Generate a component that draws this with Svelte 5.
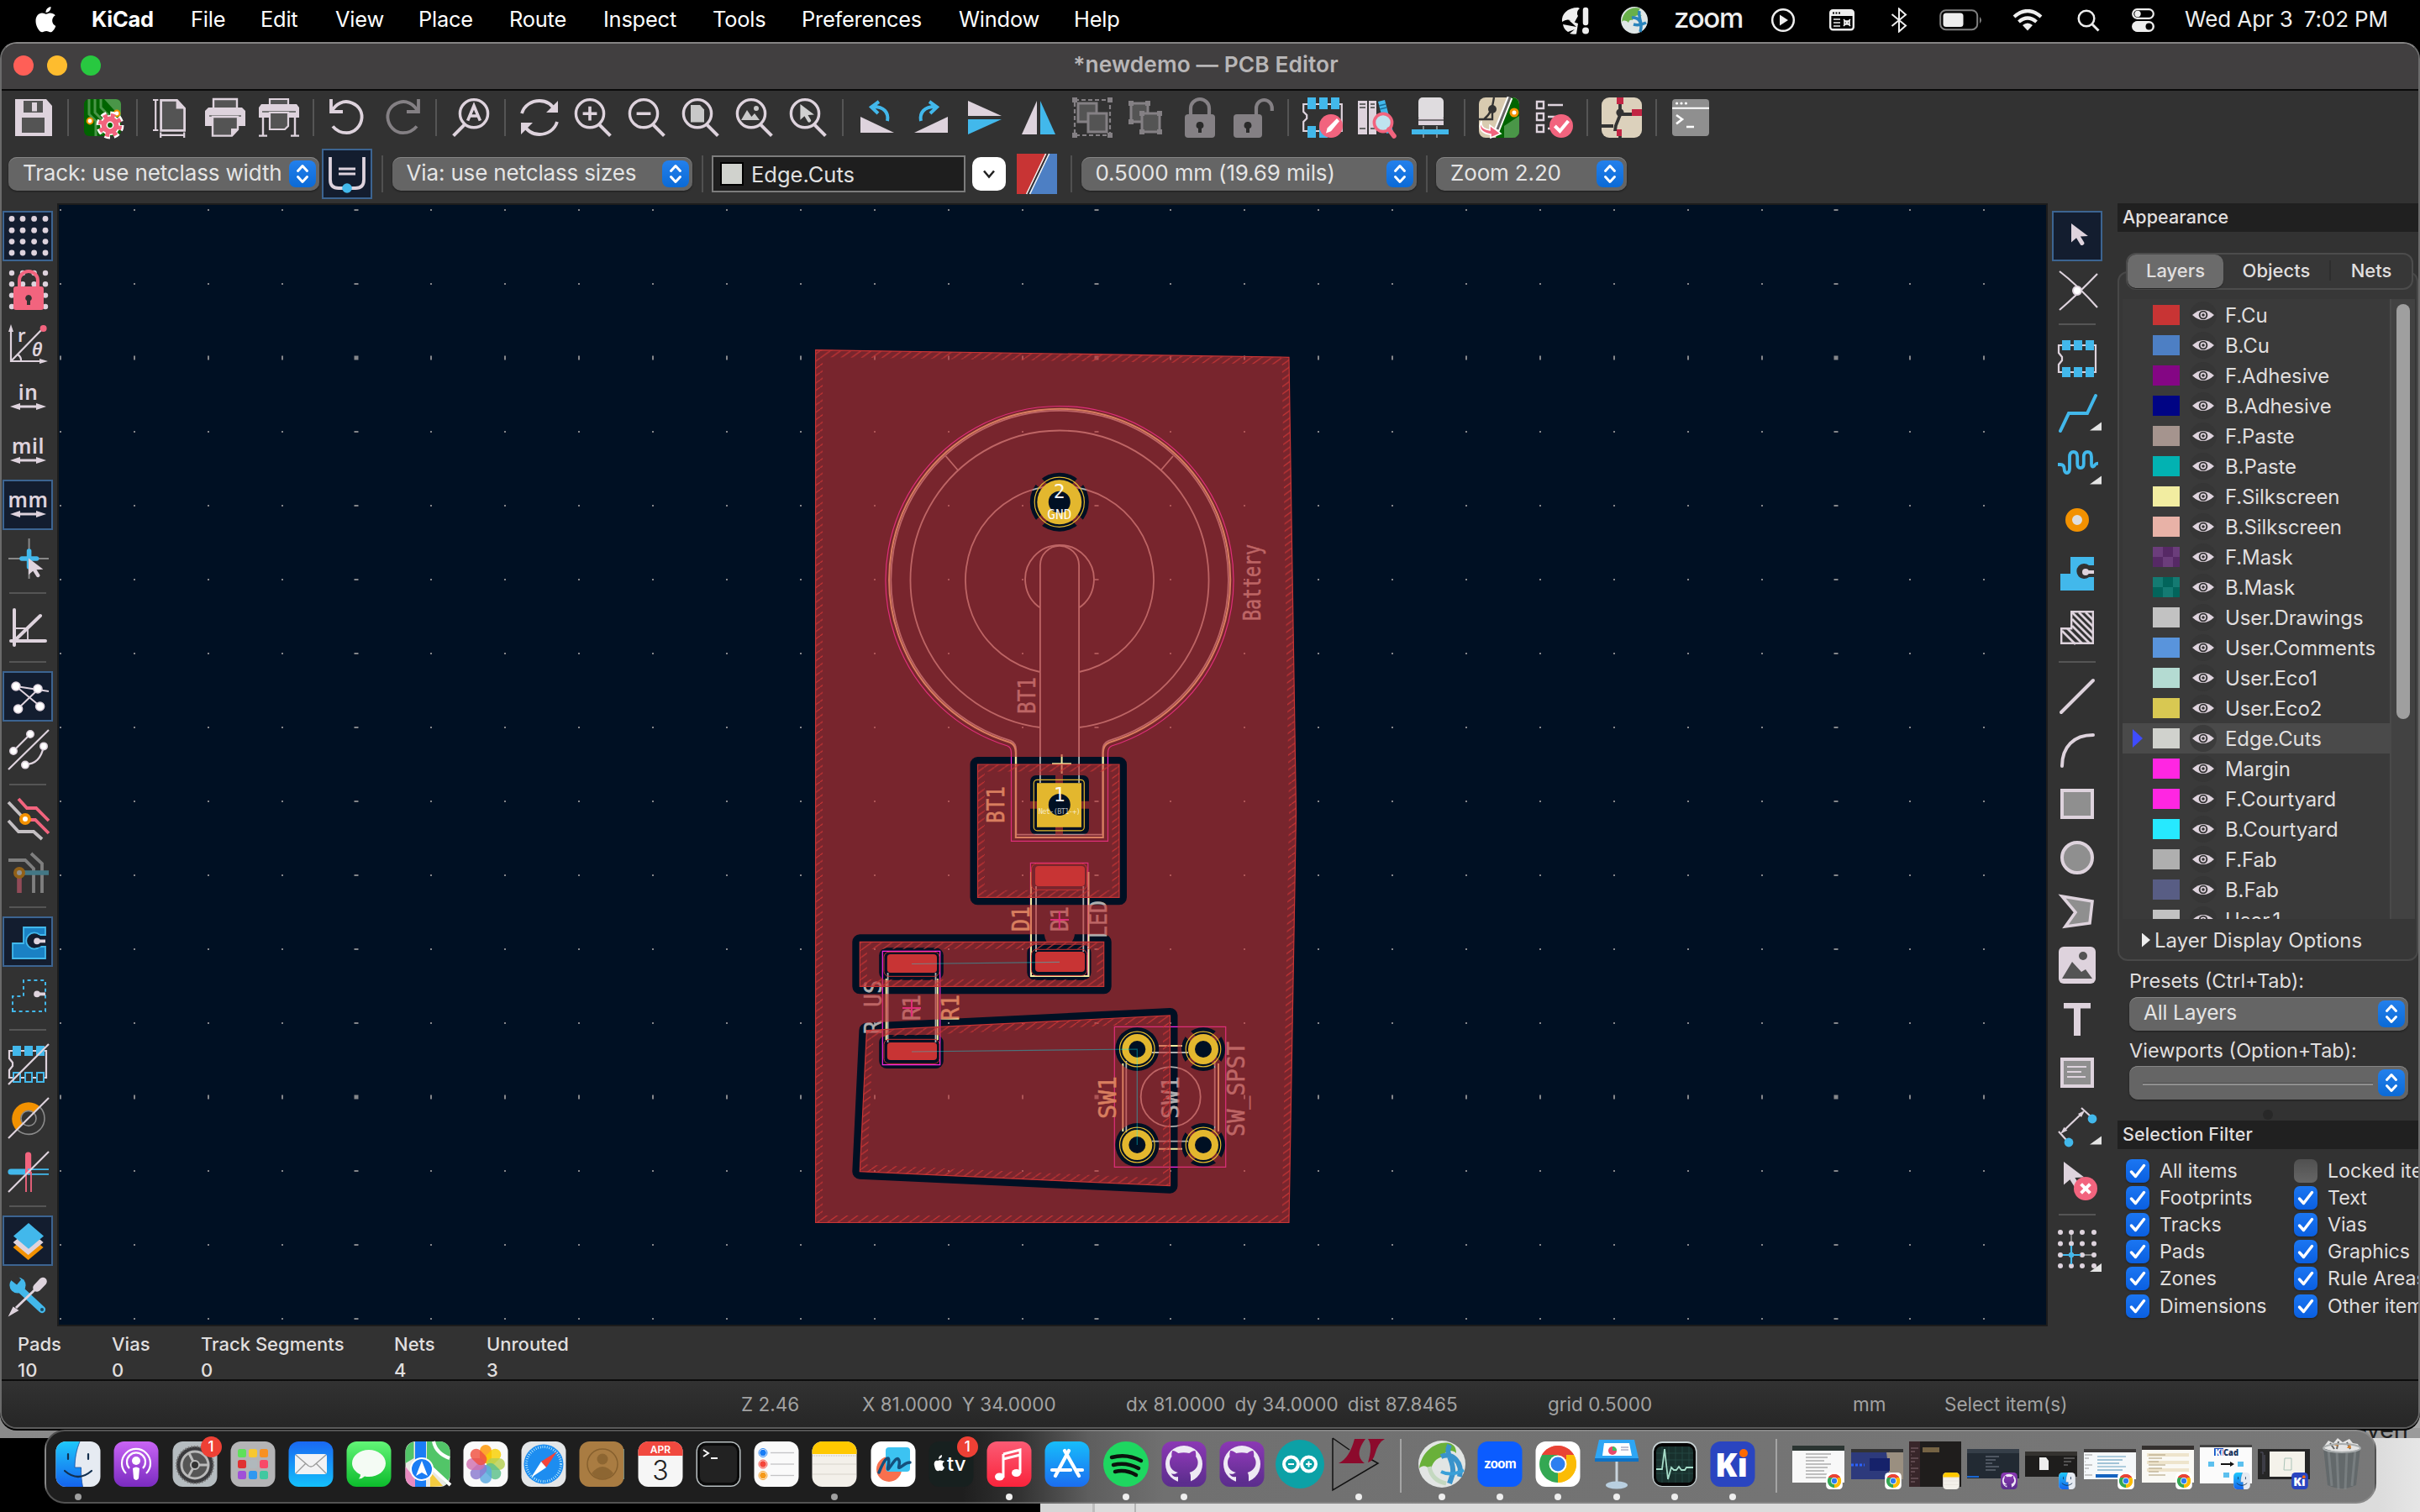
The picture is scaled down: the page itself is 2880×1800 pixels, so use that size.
<script>
  const L = '#ded3dd', B = '#42b8eb', P = '#f2647e', O = '#f29100', D = '#848084', G = '#545454';

  const mag = (inner) => `<circle cx="10" cy="9.6" r="8.3" fill="none" stroke="${L}" stroke-width="1.7"/><path d="M15.6 16.2l6.6 6.6" stroke="${L}" stroke-width="2"/>${inner}`;
  const arrowCursor = (x, y, s, c = L) => `<path transform="translate(${x} ${y}) scale(${s})" d="M0 0v12l3.2-2.8 2.6 4.2c.8 1.2 3-.1 2.3-1.4L5.8 8.3 10.6 8z" fill="${c}"/>`;
  const chip = (fillBottom = true) => `<path d="M1 4h22v16H1v-4.5l2-2.5v-2L1 8.500z" fill="none" stroke="${L}" stroke-width="1.1"/>` +
    [3, 10, 17].map((x) => `<rect x="${x}" y="1" width="5" height="6" fill="${B}"/>` + (fillBottom ? `<rect x="${x}" y="17" width="5" height="6" fill="${B}"/>` : `<rect x="${x + 0.5}" y="17" width="4" height="5.500" fill="#323232" stroke="${B}"/>`)).join('');
  const dots = (xs, ys, r = 1.25) => ys.map((y) => xs.map((x) => `<circle cx="${x}" cy="${y}" r="${r}" fill="${L}"/>`).join('')).join('');
  const units = (t) => `<text x="12.300" y="13.500" font-family="Noto Sans" font-weight="600" font-size="12.200" letter-spacing=".3" text-anchor="middle" fill="${L}">${t}</text><path d="M1.500 17.500l6-2v1.300h9.500v-1.300l6 2-6 2v-1.300H7.500v1.300z" fill="${L}"/>`;
  const box = (x, y, w, h, c) => `<rect x="${x}" y="${y}" width="${w}" height="${h}" fill="${G}" stroke="${c}" stroke-width="1.500"/>`;
  const sq = (x, y, c) => `<rect x="${x}" y="${y}" width="3" height="3" fill="${c}"/>`;
  const flyout = `<path d="M26.500 17.800v5h-7z" fill="#e4e4e4"/>`;

  const icons = {
    save: `<path d="M1 1h18.500L23 5v18H1z" fill="${L}"/><path d="M6 2h11.500v7H6zM5 12h13.500v9H5z" fill="${G}"/><path d="M11 3h3v5.300h-3z" fill="${L}"/>`,
    setup: `<rect x="1" y="1" width="22" height="22" rx="3" fill="#006400"/><path d="M4 1v9l4 4v9M7.500 1v8l4 4v9M11 1v5l5 5" stroke="#4a9648" stroke-width="1.500" fill="none"/><path d="M13 1h7a3 3 0 0 1 3 3v8z" fill="#4a9648"/><circle cx="4.500" cy="14" r="1.700" fill="#fff" stroke="${O}"/><circle cx="20.500" cy="9.500" r="1.700" fill="#fff" stroke="${O}"/><circle cx="16.500" cy="16.500" r="6" fill="none" stroke="#fff" stroke-width="4.500" stroke-dasharray="2.700 2"/><circle cx="16.500" cy="16.500" r="3.700" fill="none" stroke="#fff" stroke-width="4.500"/><circle cx="16.500" cy="16.500" r="5.800" fill="none" stroke="${P}" stroke-width="2.500" stroke-dasharray="2.500 2.050" stroke-dashoffset="-.3"/><circle cx="16.500" cy="16.500" r="3.700" fill="none" stroke="${P}" stroke-width="3"/>`,
    page: `<path d="M5.800 1.700h9.500l4.500 4.800v13.200h-14z" fill="${G}" stroke="${L}" stroke-width="1.400"/><path d="M14.800 1.500v5.300h5z" fill="${L}"/><path d="M1 1.500h3.200M1 19.500h3.200M2.600 1.500v18M5.600 22.400h14M5.600 20.800V24M19.600 20.800V24" stroke="${L}" stroke-width="1.100"/>`,
    print: `<path d="M5 1h14v6H5z" fill="${G}" stroke="${L}" stroke-width="1.200"/><path d="M2 6h20l2 2v9h-4v-6H4v6H0V8z" fill="${L}"/><path d="M2.500 11h19" stroke="#777" stroke-width="1"/><path d="M4.500 11.500h15V19l-3.500 3.800H4.500z" fill="${G}" stroke="${L}" stroke-width="1.200"/><path d="M15.500 23v-4.500h4z" fill="${L}"/>`,
    plot: `<path d="M6.500 1h11v4h-11z" fill="${G}" stroke="${L}" stroke-width="1.100"/><path d="M1.500 4h21L24 6v6H0V6z" fill="${L}"/><path d="M2 8.500h20" stroke="#777"/><path d="M6.500 9h11v8l-2 2h-9z" fill="${G}" stroke="${L}" stroke-width="1.100"/><path d="M2.500 12v10.500M21.500 12v10.500M0 22.800h5M19 22.800h5" stroke="${L}" stroke-width="1.200"/>`,
    undo: `<path d="M2 1v7.500h7" fill="none" stroke="${L}" stroke-width="1.900"/><path d="M2.500 8C5 3.500 9.500 1.800 13 2.800c4.500 1.200 7.600 4.700 7.300 9.300-.4 5-4.300 9-9 9-3.300 0-6-1.100-8.300-3.900" fill="none" stroke="${L}" stroke-width="1.900"/>`,
    redo: `<path d="M22 1v7.500h-7" fill="none" stroke="${D}" stroke-width="1.900"/><path d="M21.500 8C19 3.500 14.500 1.800 11 2.800 6.500 4 3.400 7.500 3.700 12.100c.4 5 4.300 9 9 9 3.300 0 6-1.100 8.300-3.900" fill="none" stroke="${D}" stroke-width="1.900"/>`,
    find: `<circle cx="14" cy="9.600" r="8.300" fill="none" stroke="${L}" stroke-width="1.700"/><path d="M8.400 16.200l-6.600 6.600" stroke="${L}" stroke-width="2"/><path d="M10.300 13.800L14 5l3.700 8.800M11.700 11h4.600" fill="none" stroke="${L}" stroke-width="1.800"/>`,
    refresh: `<path d="M1.500 9.500C3 4.500 7.500 2 12 2c4 0 7.500 2.300 9.500 6M22.500 14.500C21 19.500 16.500 22 12 22c-4 0-7.500-2.300-9.500-6" fill="none" stroke="${L}" stroke-width="1.900"/><path d="M23 2v7h-7zM1 22v-7h7z" fill="${L}"/>`,
    zoomin: mag(`<path d="M10 5.400v8.400M5.800 9.600h8.400" stroke="${L}" stroke-width="1.800"/>`),
    zoomout: mag(`<path d="M5.800 9.600h8.400" stroke="${L}" stroke-width="1.800"/>`),
    zoompage: mag(`<path d="M6 4.500h5.500L14 7.300v7.400H6z" fill="#c8c8c8"/>`),
    zoomobj: mag(`<path d="M4 13.500l3.500-6 2.700 4 1.800-2 3 4z" fill="#c8c8c8"/><circle cx="13" cy="6.500" r="1.500" fill="#c8c8c8"/>`),
    zoomsel: mag(arrowCursor(7.2, 4, 0.78, '#d0d0d0')),
    rotl: `<path d="M2 11.500V21h20z" fill="${L}"/><path d="M18 14C19 9 16 5.500 9.500 5.500M13 2.500L8.500 5.700 12.500 9.500" fill="none" stroke="${B}" stroke-width="2"/>`,
    rotr: `<path d="M22 11.500V21H2z" fill="${L}"/><path d="M6 14C5 9 8 5.500 14.500 5.500M11 2.500l4.500 3.200L11.500 9.500" fill="none" stroke="${B}" stroke-width="2"/>`,
    mirv: `<path d="M2 2v9h20z" fill="${L}"/><path d="M2 22v-9h20z" fill="${B}"/>`,
    mirh: `<path d="M2 22h9V2z" fill="${L}"/><path d="M22 22h-9V2z" fill="${B}"/>`,
    group: `<path d="M1.500 1.500h21v21h-21z" fill="none" stroke="${D}" stroke-width="1.100" stroke-dasharray="2.500 1.500"/>${box(3.5, 3.5, 11, 11, D)}${box(9.5, 9.5, 11, 11, D)}${sq(0, 0, D)}${sq(21, 0, D)}${sq(0, 21, D)}${sq(21, 21, D)}`,
    ungroup: `${box(3, 3.5, 10, 11, D)}${box(9.500, 9.5, 10.500, 11, D)}${[[1.5, 2], [11.5, 2], [1.5, 13], [8, 8], [18.500, 8], [8, 19], [18.500, 19]].map(([x, y]) => sq(x, y, D)).join('')}`,
    lock: `<path d="M6.500 11V6.500a5.500 5.500 0 0 1 11 0V11" fill="none" stroke="${D}" stroke-width="2.100"/><rect x="3" y="10" width="18" height="14" rx="2" fill="${D}"/><path d="M12 14.500a2.100 2.100 0 0 1 1 4V21h-2v-2.500a2.100 2.100 0 0 1 1-4z" fill="#2a2a2a"/>`,
    unlock: `<path d="M13.500 11V6.500a4.700 5 0 0 1 9.400 0V8" fill="none" stroke="${D}" stroke-width="2.100"/><rect x="0" y="10" width="17" height="14" rx="2" fill="${D}"/><path d="M8.500 14.500a2.100 2.100 0 0 1 1 4V21h-2v-2.500a2.100 2.100 0 0 1 1-4z" fill="#2a2a2a"/>`,
    fpedit: `<path d="M.6 4h22.800v16H.6v-5.500l2-2v-2l-2-2z" fill="none" stroke="${L}" stroke-width="1.100"/><path d="M3 0h5v7H3zM10 0h5v7h-5zM17 0h5v7h-5zM3 17h5v7H3zM10 17h5v7h-5z" fill="${B}"/><circle cx="17" cy="17" r="7" fill="${P}"/><path d="M20.500 12.500l1.500 1.600-5 6-3 1.200.8-3z" fill="#fff"/>`,
    lib: `<path d="M1 2h5.500v20H1zM7.500 2H12v20H7.500z" fill="${L}"/><path d="M2 4h3.500M2 6h3.500M8.500 4H11M8.500 6H11M2 18.500h3.500M8.500 18.500H11" stroke="#666"/><path d="M13 2.500l4-1 5 19-4 1z" fill="${B}"/><path d="M13.500 5l4-1M14 7l4-1" stroke="#1a6f99" stroke-width=".7"/><circle cx="16" cy="15" r="5.300" fill="#bfe3ef" stroke="${P}" stroke-width="1.800"/><path d="M19.500 19l3 4" stroke="${P}" stroke-width="2.800" stroke-linecap="round"/>`,
    show3d: `<rect x="5" y="0" width="15" height="14" rx="2.500" fill="#dfdcdf"/><path d="M5 12.500h15v4H5z" fill="${L}"/><path d="M5 13.500h15" stroke="#555" stroke-width=".7"/><path d="M8 17v7M16 17v7" stroke="#888"/><rect x="1" y="19" width="22" height="3" fill="${B}"/>`,
    update: `<rect width="24" height="24" rx="4" fill="#d8cbb0"/><path d="M18 0h2a4 4 0 0 1 4 4v16a4 4 0 0 1-4 4H10z" fill="#006400"/><path d="M24 11v9a4 4 0 0 1-4 4h-5v-7z" fill="#4a9648"/><path d="M9 0c-1 5-1 9-6 13M8 7v6H0" stroke="#333" stroke-width="1.200" fill="none"/><circle cx="8" cy="7" r="2.500" fill="#333"/><path d="M18.500 0L10.500 20" stroke="#fff" stroke-width="3.500"/><path d="M18.500 0L11 19" stroke="#666" stroke-width="1.500"/><circle cx="21" cy="9" r="2" fill="#fff" stroke="${O}" stroke-width="1.500"/><path d="M1.500 14c-.5 4 2 5 5 5.500v-3l6.500 5L7 24v-2C2.500 21.500-1 19 1.500 14z" fill="${P}" stroke="#fff" stroke-width=".8"/>`,
    drc: `<path d="M2.500 2.500h4v4h-4zM2.500 9.500h4v4h-4zM2.500 16.500h4v4h-4zM9 4.500h9M9 11.500h6M9 18.500h3" fill="none" stroke="${L}" stroke-width="1.200"/><circle cx="17" cy="17" r="7" fill="${P}"/><path d="M13.200 17l3 3 5-6" fill="none" stroke="#fff" stroke-width="2"/>`,
    route: `<rect width="24" height="24" rx="4.500" fill="#dcd1bc"/><path d="M11 3v6l1 1h7M11 9c0 5-3 5-3 11M0 17h7M11 20v4" fill="none" stroke="#333" stroke-width="1.900"/><circle cx="11" cy="9" r="2.300" fill="#333"/><path d="M9 0h4v4H9zM18 7h6v4h-6zM9 19h3v4H9z" fill="#c22644"/>`,
    term: `<rect x="1" y="1" width="22" height="22" rx="2" fill="#8f8f8f"/><path d="M1 6.400h22" stroke="#fff"/><path d="M3.500 10.500L7 13l-3.500 2.700M9.500 17.500h4.500" fill="none" stroke="#fff" stroke-width="1.300"/><circle cx="3.800" cy="3.500" r=".8" fill="#fff"/><circle cx="6.500" cy="3.500" r=".8" fill="#fff"/><circle cx="9.200" cy="3.500" r=".8" fill="#fff"/>`,
    autotrack: `<path d="M2 2v13.500q0 5 5 5h10q5 0 5-5V2" fill="none" stroke="${L}" stroke-width="1.900"/><path d="M7 9h10M7 12h10" stroke="${L}" stroke-width="1.400"/><circle cx="12" cy="20.500" r="2.900" fill="${B}"/>`,
    pair: `<path d="M0 0h18L6 24H0z" fill="#c83434"/><path d="M19 0h5v24H7z" fill="#4d7fc4"/><path d="M17.300 0L5.800 24M19.300 0L7.800 24" stroke="#eee" stroke-width=".8"/><path d="M18.300 0L6.800 24" stroke="#333" stroke-width=".7"/>`,

    grid: dots([2.500, 9, 15.800, 22.500], [1.700, 8.600, 15.300, 22], 1.700),
    gridlock: dots([2.500, 9, 15.800, 22.500], [2, 8.600, 15.300, 22], 1.600) + `<path d="M7 10V6.500a5.500 5.500 0 0 1 11 0V10" fill="none" stroke="${P}" stroke-width="2"/><rect x="3.500" y="10" width="18" height="14" rx="1.500" fill="${P}"/><path d="M12.500 15a1.900 1.900 0 0 1 1 3.500V21h-2v-2.500a1.900 1.900 0 0 1 1-3.500z" fill="#323232"/>`,
    polar: `<path d="M2 3v19.500h20" fill="none" stroke="${L}" stroke-width="1.100"/><path d="M.5 5L2 .5 3.500 5zM19 21l5 1.500L19 24z" fill="${L}"/><path d="M2 22.500L21 3M6 18.500q2.300 1.500 2 4" fill="none" stroke="${L}" stroke-width="1.100"/><circle cx="21.300" cy="3" r="2" fill="${P}"/><text x="6" y="11" font-family="Noto Sans" font-weight="600" font-size="11" fill="${L}">r</text><text x="14.500" y="19.500" font-family="Noto Sans" font-style="italic" font-weight="600" font-size="11" fill="${L}">θ</text>`,
    inch: units('in'),
    mil: units('mil'),
    mm: units('mm'),
    cross: `<path d="M12.800 0v24M.5 12h24" stroke="#888" stroke-width="1"/><path d="M12.800 7.500v9.500M8.500 12h8.800" stroke="${B}" stroke-width="2.800" stroke-linecap="round"/>${arrowCursor(12.500, 11.800, 0.820)}`,
    angle: `<path d="M4 1.500v21M2 20h20.500M4 20L19.500 5" fill="none" stroke="${L}" stroke-width="2" stroke-linecap="round"/><path d="M4 12.500h8V20" fill="none" stroke="${L}" stroke-width=".9"/>`,
    rats: `<path d="M5 6l19.500 3M5 6l14.500 12M6 19.500L18.500 7.500" stroke="${L}" stroke-width="1"/><g fill="#fff" stroke="${L}" stroke-width=".8"><circle cx="5" cy="6" r="2.500"/><circle cx="18" cy="7.500" r="2.500"/><circle cx="6.300" cy="19.500" r="2.500"/><circle cx="19.300" cy="18" r="2.500"/></g>`,
    curved: `<path d="M.5 23.500L24.500 0M3.500 12.500l10-10M10.500 20.500q9 0 11-11" fill="none" stroke="${L}" stroke-width="1.100"/><g fill="#fff" stroke="${L}" stroke-width=".8"><circle cx="3.500" cy="12.500" r="2.100"/><circle cx="13.500" cy="2.500" r="2.100"/><circle cx="10.500" cy="20.800" r="2.100"/><circle cx="21.500" cy="9.700" r="2.100"/></g>`,
    hilite: `<path d="M.5 2L10 12M.5 13l6 6.500h9l5 4.500" stroke="#c4c0c3" stroke-width="1.900" fill="none"/><path d="M6.500 0l5 5.500h5.500l7.500 7.500M11 12.500h5.500l8 8" stroke="${P}" stroke-width="1.900" fill="none"/><circle cx="10.500" cy="12" r="2.500" fill="#fff" stroke="${O}" stroke-width="2"/>`,
    hilite2: `<g opacity=".5"><path d="M.5 4.500h10l5 5V24M14 .5l6.500 6V24" stroke="#ccc" stroke-width="1.900" fill="none"/><path d="M7 12h17.500" stroke="#55bcd8" stroke-width="2.700"/><path d="M7 13v11" stroke="${P}" stroke-width="2.800"/><circle cx="7" cy="12" r="2.500" fill="#eee" stroke="${O}" stroke-width="2"/></g>`,
    zonefill: `<path d="M3 22V13h6.500V3.500h13V8h-3.300a4.800 4.800 0 1 0 0 7h3.300v7z" fill="#1a81c4" stroke="${B}" stroke-width=".9"/><circle cx="17.500" cy="11.700" r="3.800" fill="#131d2f"/><circle cx="17.500" cy="11.700" r="1.900" fill="${L}"/><path d="M17.500 11.700h5" stroke="${L}" stroke-width="1.900"/>`,
    zoneout: `<path d="M3 21.500V12.500h6.500V3h13v18.500z" fill="none" stroke="${B}" stroke-width="1" stroke-dasharray="2 1.900"/><circle cx="17.500" cy="11.200" r="1.900" fill="${L}"/><path d="M17.500 11.200h5" stroke="${L}" stroke-width="1.900"/>`,
    fpsketch: `${chip(false)}<path d="M.5 24L24.500 0" stroke="${L}" stroke-width="1.100"/>`,
    viasketch: `<path d="M5.500 19.500A9.800 9.800 0 0 1 19.500 5.500L15.500 9.200A4.500 4.500 0 0 0 9 15.500z" fill="${O}"/><circle cx="12.500" cy="12.200" r="9.500" fill="none" stroke="#8a8a8a" stroke-width=".8" stroke-dasharray="30 30" stroke-dashoffset="8"/><circle cx="12.500" cy="12.200" r="4.500" fill="none" stroke="#8a8a8a" stroke-width=".8"/><path d="M.5 24L24.500 0" stroke="${L}" stroke-width="1.100"/>`,
    tracksketch: `<path d="M2 12h9" stroke="${B}" stroke-width="3.600" stroke-linecap="round"/><path d="M12.300 2v10" stroke="${P}" stroke-width="3.600" stroke-linecap="round"/><path d="M12 10.600h12.500M12 13.400h12.500" stroke="${B}" stroke-width=".9"/><path d="M11 12v12M14 12v12" stroke="${P}" stroke-width=".9"/><path d="M.5 24L24.500 0" stroke="${L}" stroke-width="1.100"/>`,
    layers: `<path d="M12.300 8.500l9 7.500-9 7.500-9-7.500z" fill="${O}"/><path d="M12.300 5.500l9 7.500-9 7.500-9-7.500z" fill="${L}"/><path d="M12.500 1.500l9 7.700-9 7.700-9-7.700z" fill="${B}"/>`,
    tools: `<path d="M7 8.500L20.500 21" stroke="${B}" stroke-width="4.200" stroke-linecap="round"/><circle cx="6" cy="6.500" r="4.800" fill="${B}"/><path d="M-.5 1.500L5.500 6.300 8 3.300 4 -1.500z" fill="#323232"/><circle cx="20.500" cy="21" r="1" fill="#1a4a60"/><path d="M5 20L17 8.500" stroke="${L}" stroke-width="1.500"/><path d="M17.500 8L21 4.300" stroke="${L}" stroke-width="4.800" stroke-linecap="round"/><path d="M1.500 24l2-4 2.300 1.500z" fill="${L}" stroke="${L}"/>`,

    select: arrowCursor(8.500, 4.500, 0.940),
    local: `<path d="M1.500 1Q12 9 24 22.500M1.500 24Q12 15 24 2.500" stroke="${L}" stroke-width="1.100" fill="none"/><circle cx="12" cy="12.500" r="2.500" fill="#fff" stroke="${L}"/>`,
    footprint: chip(),
    track: `<path d="M2 23L7 12.500h11L23 2" fill="none" stroke="${B}" stroke-width="2" stroke-linecap="round"/>${flyout}`,
    tune: `<path transform="translate(0 1.500)" d="M.5 9.500h1.500q2.200 0 2.300 2.500t1.600 2.500 1.600-2.500V5q0-3 2.300-3t2.300 3v4q0 2.500 1.900 2.500t1.900-2.500V5q0-3 2.300-3t2.300 3v4q0 2.500 1.500 1.500 1-1.700 2.500-1.700" fill="none" stroke="${B}" stroke-width="1.900"/><path d="M26.500 17.800v5h-7z" fill="#e4e4e4"/>`,
    via: `<circle cx="12" cy="12" r="5" fill="#ddd" stroke="${O}" stroke-width="4"/>`,
    zone: `<path d="M2 22V12h6V2h14v5h-3a4.500 4.500 0 1 0 0 7h3v8z" fill="${B}"/><circle cx="17" cy="11" r="3.500" fill="#323232"/><circle cx="17" cy="11" r="2" fill="${L}"/><path d="M17 11h5" stroke="${L}" stroke-width="2"/>`,
    rule: `<path d="M2.600 21.400V12.600H8.600V2.600h12.800v18.800z" fill="#323232" stroke="${L}" stroke-width="1.200"/><path d="M3 14l8 8M6 12.500l9 9M9 11l10.500 10.500M9 7l12.500 12.500M9 3l12.500 12.500M13 3l8.500 8.500M17 3l4.500 4.500" stroke="${L}" stroke-width="1.400"/>`,
    line: `<path d="M2.500 21.500L21.500 2.500" stroke="${L}" stroke-width="2" stroke-linecap="round"/>`,
    arc: `<path d="M3 21.500C3 10 10 3 21.500 3" fill="none" stroke="${L}" stroke-width="2" stroke-linecap="round"/>`,
    rect: `<rect x="3" y="4" width="18" height="16" fill="#8f8f8f" stroke="${L}" stroke-width="2"/>`,
    circle: `<circle cx="12" cy="12" r="9" fill="#8f8f8f" stroke="${L}" stroke-width="2"/>`,
    poly: `<path d="M3 3l18 3-1.500 13L5 21l6-8.500z" fill="#8f8f8f" stroke="${L}" stroke-width="1.800"/>`,
    image: `<rect x="1" y="1" width="22" height="22" rx="3" fill="${L}"/><path d="M3 20L9 10l5.500 6 2.500-1.500L21 20z" fill="${G}"/><circle cx="15.500" cy="6.500" r="2.500" fill="${G}"/>`,
    text: `<path d="M4 2.500h16v3.300h-6V22h-4V5.800H4z" fill="${L}"/>`,
    textbox: `<rect x="3" y="4" width="18" height="16" fill="#8f8f8f" stroke="${L}" stroke-width="2"/><path d="M6 8.500h11.500M6 11.500h8.500M6 14.500h11" stroke="${L}"/>`,
    dim: `<path d="M1 15l4.500 5M14.500 1l5.500 5M3 15.500L15.500 3.500" stroke="${L}" stroke-width="1.100" fill="none"/><path d="M2.200 16.200l2-3.800 2 2zM16.500 2.500l-2 4-2-2z" fill="${L}"/><circle cx="7" cy="21.500" r="2.700" fill="${B}"/><circle cx="21" cy="7.500" r="2.700" fill="${B}"/>${flyout}`,
    del: `${arrowCursor(4, 1, 1.150)}<circle cx="17" cy="17" r="7" fill="${P}"/><path d="M14.300 14.300l5.400 5.400M19.700 14.300l-5.400 5.400" stroke="#fff" stroke-width="2"/>`,
    gridorigin: `<path d="M8.500 2v9M15 15.500h7.500" stroke="#888" stroke-width=".9"/>${dots([2, 8.500, 15, 22], [2, 8.800, 15.500, 22], 1.500)}<path d="M8.500 10v11M3.500 15.500H14" stroke="${B}" stroke-width="1.100"/><circle cx="8.500" cy="15.500" r="1.500" fill="${B}"/><path d="M26.500 20.500v5h-7z" fill="#e4e4e4"/>`
  };

  const topTools = 'save | setup | page print plot | undo redo | find | refresh zoomin zoomout zoompage zoomobj zoomsel | rotl rotr mirv mirh group ungroup lock unlock | fpedit lib show3d | update drc | route | term'.split(' ');
  const leftTools = 'grid* gridlock polar inch mil mm* cross | angle | rats* curved | hilite hilite2 | zonefill* zoneout | fpsketch viasketch tracksketch | layers* tools'.split(' ');
  const rightTools = 'select* local | footprint track tune via zone rule | line arc rect circle poly image text textbox dim del | gridorigin'.split(' ');

  const menus = ['File', 'Edit', 'View', 'Place', 'Route', 'Inspect', 'Tools', 'Preferences', 'Window', 'Help'];

  const layers = [
    ['F.Cu', '#c83434'], ['B.Cu', '#4d7fc4'], ['F.Adhesive', '#840684'], ['B.Adhesive', '#000484'],
    ['F.Paste', '#a5948e'], ['B.Paste', '#02b2b2'], ['F.Silkscreen', '#f2eda1'], ['B.Silkscreen', '#e8b2a7'],
    ['F.Mask', '', 'fmask'], ['B.Mask', '', 'bmask'], ['User.Drawings', '#c2c2c2'], ['User.Comments', '#5994dc'],
    ['User.Eco1', '#b4dbd2'], ['User.Eco2', '#d8c852'], ['Edge.Cuts', '#d0d2cd'], ['Margin', '#ff26e2'],
    ['F.Courtyard', '#ff26e2'], ['B.Courtyard', '#26e9ff'], ['F.Fab', '#afafaf'], ['B.Fab', '#585d84'], ['User.1', '#c2c2c2']
  ];

  const filters = [
    ['All items', true], ['Locked items', false], ['Footprints', true], ['Text', true], ['Tracks', true], ['Vias', true],
    ['Pads', true], ['Graphics', true], ['Zones', true], ['Rule Areas', true], ['Dimensions', true], ['Other items', true]
  ];

  // Canvas grid: every tenth line is drawn heavier.
  const gridDots = [];
  for (let i = 0; i < 27; i++) {
    for (let j = 0; j < 16; j++) {
      const x = Math.round(72.300 + i * 88.040), y = Math.round(249.500 + j * 88);
      const w = i % 10 === 4 ? 5 : 2, h = j % 10 === 2 ? 5 : 2;
      gridDots.push({ x: x - w / 2, y: y - h / 2, w, h });
    }
  }

  const board = '970.6,416.6 1534,425.3 1542.5,967 1534,1455.5 970.6,1455.5';
  const zones = [
    '1163.5,910 1332,910 1332,1068.3 1163.5,1068.3',
    '1023.3,1121.3 1313.7,1121.3 1313.7,1174.3 1023.3,1174.3',
    '1031.4,1226.7 1392.5,1209 1392.5,1411.7 1023.3,1394.7'
  ];
  const outline = 'M1202.300 884A203 203 0 1 1 1320 884Q1312.800 887 1312.800 896V997H1208.800V896Q1208.800 887 1202.300 884z';
  const swPads = [[1353.300, 1249], [1353.300, 1363], [1432, 1249], [1432, 1363]];

  const tile = (fill, inner = '') => `<rect x=".5" y="0" width="53" height="54" rx="12" fill="${fill}"/>${inner}`;
  const octo = `<circle cx="27" cy="27" r="22" fill="#eee9f4"/><path d="M20 49v-7c-4 1-7-1-8-4 4 2 5 0 8-1-7-2-10-6-10-12 0-3 1-5 2.500-7-.5-3 0-5 .8-7 3 0 5 1.500 7 3a28 28 0 0 1 13 0c2-1.500 4-3 7-3 .8 2 1.300 4 .8 7 1.500 2 2.500 4 2.500 7 0 6-4 10-10 12 1 1 1.400 3 1.400 5v7q-7 2.500-15 0z" fill="url(#dk-pur)"/>`;
  const chrome = `<circle cx="27" cy="27" r="22" fill="#fff"/><path d="M27 27L8 16a22 22 0 0 1 38 0z" fill="#e94335"/><path d="M27 27L46 16a22 22 0 0 1-19 33z" fill="#fbbc05"/><path d="M27 27L27 49A22 22 0 0 1 8 16z" fill="#34a853"/><path d="M27 16h19H27z" fill="#e94335"/><path d="M27 27L17.500 32.500 8 16h19z" fill="#34a853"/><path d="M8 16h38a22 22 0 0 0-38 0z" fill="#e94335"/><path d="M27 49l10-17 0-16h9a22 22 0 0 1-19 33z" fill="#fbbc05"/><circle cx="27" cy="27" r="10.500" fill="#fff"/><circle cx="27" cy="27" r="8.500" fill="#2d7ff0"/>`;
  const finder = tile('#e6ebf2', `<path d="M12.500 0H29c-4 10-6 20-6 31h7.500c0 9 .5 16 2 23h-20a12 12 0 0 1-12-12V12a12 12 0 0 1 12-12z" fill="url(#dk-fin)"/><path d="M29 0c-4 10-6 20-6 31h7.500c0 9 .5 16 2 23" fill="none" stroke="#1c4f9c" stroke-width=".8"/><path d="M15 15v6M39 15v6M11 35q16 14 32 0" fill="none" stroke="#12304f" stroke-width="2.200" stroke-linecap="round"/>`);
  const ki = tile('#2a45c0', `<text x="6" y="42" font-family="Open Sans" font-weight="800" font-size="38" textLength="39" lengthAdjust="spacingAndGlyphs" fill="#fff">Kı</text><circle cx="40" cy="14" r="5" fill="#ff6a00"/>`);
  const notes = tile('#f3f0ea', `<path d="M.5 15V12a12 12 0 0 1 12-12h29a12 12 0 0 1 12 12v3z" fill="#ffc800"/><path d="M1 17h52" stroke="#bbb" stroke-dasharray="1 1"/><path d="M1 27h52M1 39h52" stroke="#d8d4cc"/>`);
  const github = tile('url(#dk-pur)', octo);
  const petals = ['#ff9500', '#f8d000', '#b4d050', '#5cc08a', '#5aaae0', '#8a7ad0', '#d070b0', '#f05040'];
  const keys = ['#5ee05a', '#f8c830', '#f89020', '#e03030', '#b0b8bc', '#f84868', '#a050d8', '#3098f0', '#40c8a0'];

  const dockA = [
    [finder, 1],
    [tile('url(#dk-pod)', '<g fill="none" stroke="#fff" stroke-width="2.200"><path d="M15 38a17 17 0 1 1 24 0M19 32a11 11 0 1 1 16 0"/></g><circle cx="27" cy="23" r="5" fill="#fff"/><path d="M23 32q4-3 8 0l-1 12q-3 4-6 0z" fill="#fff"/>')],
    [tile('#b5bcc0', '<circle cx="27" cy="28" r="22" fill="#3a3a3d" stroke="#777" stroke-width="2" stroke-dasharray="2 1.500"/><circle cx="27" cy="28" r="16" fill="#555" stroke="#b8b8b8" stroke-width="3"/><path d="M27 28L20 14M27 28h17M27 28l-8 14" stroke="#bbb" stroke-width="3"/><circle cx="27" cy="28" r="5" fill="#333" stroke="#bbb" stroke-width="2"/>'), 0, 1],
    [tile('#b4b4b6', keys.map((c, i) => `<rect x="${9 + (i % 3) * 13}" y="${9 + Math.floor(i / 3) * 13}" width="10" height="10" rx="2.500" fill="${c}"/>`).join(''))],
    [tile('url(#dk-mail)', '<rect x="8" y="15" width="38" height="24" rx="3" fill="#f2f2f4"/><path d="M9 16l15 13q3 2 6 0l15-13M9 38l12-12M45 38L33 26" fill="none" stroke="#999" stroke-width="1.300"/>')],
    [tile('url(#dk-msg)', '<path d="M27 10c11 0 20 7 20 16s-9 16-20 16q-3 0-5-.5-3 3-7 3 2-2 2-5c-6-3-10-8-10-13.500C7 17 16 10 27 10z" fill="#f4fbf4"/>')],
    [tile('#e9e9e4', '<path d="M.5 30L20 54h-8A12 12 0 0 1 .5 42z" fill="#e88ac0"/><path d="M26 0h15.500a12 12 0 0 1 12 12v30l-4 9L26 26zM.5 12a12 12 0 0 1 10-11.500V20L.5 26z" fill="#52c568"/><path d="M30 54V36l15 17z" fill="#f5cc40"/><path d="M12 0h13v54H12z" fill="#1a7df5"/><path d="M34 0c2 10 8 16 19 20M26 26l28 26" stroke="#fff" stroke-width="4" fill="none"/><circle cx="20" cy="33" r="13" fill="#1a7df5" stroke="#fff" stroke-width="2"/><path d="M20 23l7 18-7-4-7 4z" fill="#fff"/>')],
    [tile('#fafafa', petals.map((c, i) => `<rect x="20" y="4" width="14" height="22" rx="7" fill="${c}" opacity=".82" transform="rotate(${i * 45} 27 27)"/>`).join(''))],
    [tile('#e4e6e8', '<circle cx="27" cy="27" r="23.500" fill="#1d8df0"/><circle cx="27" cy="27" r="20.500" fill="none" stroke="#dff" stroke-width="3" stroke-dasharray=".7 2"/><path d="M43 12L30 31l-6-7z" fill="#f4453a"/><path d="M12 43l12-19 6 7z" fill="#fff"/>')],
    ['<path d="M50 9h4v36h-4z" fill="#4a9ab0"/>' + tile('#a97c42', '<circle cx="28" cy="27" r="18" fill="none" stroke="#86602e" stroke-width="1.500"/><circle cx="28" cy="21" r="6.500" fill="#8d6632"/><path d="M15 38q13-16 26 0-13 14-26 0z" fill="#8d6632"/>')],
    [tile('#f6f6f6', '<path d="M.5 17V12a12 12 0 0 1 12-12h29a12 12 0 0 1 12 12v5z" fill="#f1493f"/><text x="27" y="14" font-family="Inter" font-weight="600" font-size="12" text-anchor="middle" fill="#fff">APR</text><text x="27" y="46" font-family="Inter" font-weight="300" font-size="32" text-anchor="middle" fill="#222">3</text>')],
    [tile('#b9c0c2', '<rect x="2" y="1.500" width="50" height="51" rx="10" fill="#0a0a0a"/><rect x="5" y="5" width="44" height="44" rx="7" fill="#222"/><path d="M9 10l6 4-6 4M18 20h8" fill="none" stroke="#fff" stroke-width="2"/>')],
    [tile('#fafafa', ['#1a7df5', '#f4453a', '#f59a1a'].map((c, i) => `<circle cx="11" cy="${13.500 + i * 13.500}" r="4.300" fill="${c}" stroke="#fff"/><circle cx="11" cy="${13.500 + i * 13.500}" r="5" fill="none" stroke="${c}" stroke-width=".9"/><path d="M20 ${13.500 + i * 13.500}h28" stroke="#c4c4c6" stroke-width="1.300"/>`).join(''))],
    [notes, 1],
    [tile('#fff', '<circle cx="22" cy="33" r="15" fill="#f9704e"/><rect x="18" y="7" width="29" height="29" rx="4" fill="#3cc3f2"/><path d="M10 37c8-20 14-22 11-8s8-12 12-8-2 12 2 10 6-6 12-6" fill="none" stroke="#14507c" stroke-width="3.500" stroke-linecap="round"/>')],
    [tile('#17201f', '<path d="M16.500 23c-2-1-4-1-5.500 0-3-1-5 2-4 6 1 5 3 7 5 6q1.500-1 3 0c2 0 3-2 4-4-3-2-3-6 0-7-.8-1-1.600-1.300-2.500-1zM12 21q0-4 4-5 .5 4-4 5z" fill="#fff"/><text x="22" y="35" font-family="Inter" font-weight="500" font-size="24" fill="#fff">tv</text>'), 0, 1],
    [tile('url(#dk-mus)', '<path d="M20 15l20-5v28M20 15v28M20 21l20-5" fill="none" stroke="#fff" stroke-width="3"/><ellipse cx="15.500" cy="42" rx="5.500" ry="4.500" fill="#fff"/><ellipse cx="35.500" cy="37.500" rx="5.500" ry="4.500" fill="#fff"/>'), 1],
    [tile('url(#dk-app)', '<path d="M29 11L13 41M24 11l17 30M9 34h22M37 34h8" fill="none" stroke="#fff" stroke-width="4.200" stroke-linecap="round"/>')],
    ['<circle cx="27" cy="27" r="27" fill="#1ed760"/><path d="M10 19q18-5 35 4M12 28q15-4 30 4M14 36q13-3 25 4" fill="none" stroke="#0b120d" stroke-width="4.500" stroke-linecap="round"/>', 1],
    [github, 1],
    [github],
    ['<circle cx="27" cy="27" r="29" fill="#0ca1a6"/><g fill="none" stroke="#fff" stroke-width="4"><circle cx="16.500" cy="27" r="8.500"/><circle cx="37.500" cy="27" r="8.500"/></g><path d="M13 27h7M34 27h7M37.500 23.500v7" stroke="#fff" stroke-width="2"/>'],
    ['<path d="M-4-4v62l54-32-9-5M-4-4l20 14" fill="none" stroke="#111" stroke-width="1.500"/><path d="M22-3h13C27 8 24 18 34 26H3Q16 20 22-3zM38-3h20q-8 4-12 19-2 7-8 9 6-20 0-28z" fill="#8c0a2c"/>', 1]
  ];
  const dockB = [
    ['<circle cx="27" cy="27" r="28" fill="#e2e5e4"/><path d="M0 32C3 12 20-1 36 2c6 2 8 6 8 12-6-6-14-2-16 4-8 2-13 8-14 16-6-6-10-6-14-2z" fill="#69b03a"/><path d="M26 18c14-6 26 8 22 24M36 4c-6 12 6 18 4 34l-4 12" stroke="#3a93cb" stroke-width="6" fill="none"/><path d="M26 36q12 6 27-2" stroke="#3aa0d8" stroke-width="4" fill="none"/><path d="M12 30c2 12 10 18 20 20" stroke="#c4d8c0" stroke-width="5" fill="none"/>', 1],
    [tile('#0b5cff', '<text x="27" y="32" font-family="Inter" font-weight="700" font-size="15" letter-spacing="-.6" text-anchor="middle" fill="#fff">zoom</text>'), 1],
    [tile('#fff', chrome), 1],
    ['<path d="M6-2h42l5 22H1z" fill="#2ea6f5"/><path d="M1 20h52v4H1z" fill="#0f72c4"/><path d="M12 2h30l3 15H10z" fill="#fff"/><circle cx="22" cy="11" r="5" fill="#e84a6a"/><path d="M22 11v-5a5 5 0 0 1 5 5z" fill="#3ac060"/><path d="M32 7h9M32 10h9" stroke="#88a" stroke-width="1"/><path d="M27 24v27" stroke="#c9d4dc" stroke-width="3"/><ellipse cx="27" cy="52" rx="13" ry="4.500" fill="#b9cfe0"/>', 1],
    [tile('#c9d4d6', '<rect x="2" y="2" width="50" height="51" rx="10" fill="#050505"/><rect x="5" y="6" width="44" height="43" rx="6" fill="#18302d"/><path d="M12 6v43M20 6v43M28 6v43M36 6v43M44 6v43M5 14h44M5 22h44M5 30h44M5 38h44" stroke="#2a4f48" stroke-width=".7"/><path d="M5 33h7l3-24 4 36 4-14 3 3h3l3-4 3 4h4l2-3h8" fill="none" stroke="#a5dcc8" stroke-width="1.800"/>'), 1],
    [ki, 1]
  ];
  const minis = { chrome: tile('#fff', chrome), notes, github, finder, ki };
  const lines = (x, y, n, w, c) => Array.from({ length: n }, (_, i) => `<path d="M${x} ${y + i * 4}h${w - (i % 3) * 4}" stroke="${c}" stroke-width="1.200"/>`).join('');
  const thumbs = [
    ['chrome', `<path d="M0 5h62v44H0z" fill="#f8f8f8"/><path d="M0 5h62v6H0z" fill="#2b3532"/>${lines(16, 15, 8, 30, '#999')}`],
    ['chrome', `<path d="M0 9h62v36H0z" fill="#2d3a7c"/><path d="M0 9h62v4H0z" fill="#333"/><path d="M42 13h20v32H46z" fill="#9a8f80"/><path d="M22 20h24v15H22z" fill="#16226a"/><path d="M0 28h16" stroke="#2a62ff" stroke-width="3" stroke-dasharray="3 2"/>`],
    ['notes', `<path d="M0 0h62v54H0z" fill="#1f1d1c"/><path d="M0 0h13v54H0z" fill="#38262a"/><path d="M16 7h20v6H16z" fill="#756344"/>${lines(2, 8, 11, 9, '#786068')}`],
    ['github', `<path d="M0 9h62v35H0z" fill="#222a33"/><path d="M0 9h62v5H0z" fill="#353e48"/><path d="M0 41h14v2H0z" fill="#1a66d0"/>${lines(22, 18, 5, 16, '#6d7680')}`],
    ['finder', `<path d="M0 12h62v30H0z" fill="#1e1d1c"/><path d="M0 12h62v5H0z" fill="#34322f"/><path d="M17 19h8l3 4v11H17z" fill="#eee"/>${lines(46, 20, 3, 13, '#777')}`],
    ['chrome', `<path d="M0 9h62v36H0z" fill="#f5f8fa"/><path d="M0 9h62v4H0z" fill="#3c3a3a"/><path d="M14 39h28v4H14z" fill="#1464c0"/>${lines(16, 18, 5, 34, '#68a0c0')}${lines(1, 16, 7, 9, '#aaa')}`],
    ['chrome', `<path d="M0 5h62v44H0z" fill="#faf9f4"/><path d="M0 5h62v5H0z" fill="#34302e"/><path d="M6 14h50v4H6zM6 23h50v4H6zM6 32h50v4H6z" fill="#eee4cc"/>${lines(8, 16, 7, 20, '#b8a888')}`],
    ['finder', `<path d="M0 4h62v46H0z" fill="#fbfbfb"/><path d="M0 4h62v3H0z" fill="#444"/><path d="M17 8h11v9H17z" fill="#1c49b8"/><text x="18" y="17" font-family="Open Sans" font-weight="800" font-size="11" textLength="10" lengthAdjust="spacingAndGlyphs" fill="#fff">Ki</text><text x="28" y="17" font-family="Open Sans" font-weight="800" font-size="11" textLength="18" lengthAdjust="spacingAndGlyphs" fill="#16305c">Cad</text><path d="M10 24h7v6h-7zM45 24h7v6h-7zM28 37h7v6h-7z" fill="#5cc0ee"/><path d="M25 27h12" stroke="#111" stroke-width="2"/><path d="M36 24l5 3-5 3z" fill="#111"/>`],
    ['ki', `<path d="M0 9h62v36H0z" fill="#262626"/><path d="M14 12h42v30H14z" fill="#f4f2ea"/><path d="M32 20h8v14h-9z" fill="none" stroke="#aac4b8"/><path d="M3 13h3v26M8 16v20" stroke="#556" fill="none"/>`]
  ];
</script>

{#snippet icon(name)}
  <svg class="ico" viewBox="0 0 24 24">{@html icons[name]}</svg>
{/snippet}

{#snippet strip(list)}
  {#each list as t}
    {#if t === '|'}
      <i class="sep"></i>
    {:else}
      <div class="tool" class:on={t.endsWith('*')}>{@render icon(t.replace('*', ''))}</div>
    {/if}
  {/each}
{/snippet}

{#snippet popup(label, cls)}
  <div class="popup {cls}">
    <span>{label}</span>
    <svg class="stepper" viewBox="0 0 32 32"><path d="M10.500 12.500L16 6.500l5.500 6M10.500 19.500l5.500 6 5.500-6" /></svg>
  </div>
{/snippet}

{#snippet dockItem(d)}
  <div class="dk">
    <svg viewBox="0 0 54 54">{@html d[0]}</svg>
    {#if d[1]}<i class="run"></i>{/if}
    {#if d[2]}<b class="badge">1</b>{/if}
  </div>
{/snippet}

{#snippet vtext(x, y, len, t, cls)}
  <text class={cls} transform="translate({x} {y}) rotate(-90)" textLength={len} lengthAdjust="spacingAndGlyphs">{t}</text>
{/snippet}

<div class="screen">
  <header class="menubar">
    <svg class="apple" viewBox="0 0 26 31"><path d="M18 7.500c-2.200 0-3.400 1.300-4.700 1.300S10.600 7.600 8.500 7.600C4.400 7.600 1 11.200 1 17c0 6.500 4.300 13.300 7.700 13.300 1.900 0 2.700-1.200 4.900-1.200s2.800 1.200 4.800 1.200c2.900 0 5.400-4.400 6.400-7.400-5-2.100-5.700-9.500-.5-12.600-1.500-1.900-3.800-2.800-6.300-2.800zM13 7c-.3-3.600 2.700-6.700 6-7 .5 3.700-2.700 7-6 7z" fill="#fff" /></svg>
    <strong>KiCad</strong>
    {#each menus as m}<span>{m}</span>{/each}
    <div class="status">
      <svg width="33" height="33" viewBox="0 0 33 33"><path d="M20 1C7 1 0 9 1 18q8-6 14 2l5-9q-3-5 2-9zM2 21q1 6 6 9l8-3-6 5q4 1 8 .5L20 20 9 16l9 8L2 21z" fill="#eee" /><path d="M29 4v15" stroke="#eee" stroke-width="6.500" stroke-linecap="round" /><circle cx="29" cy="28.500" r="4" fill="#eee" /></svg>
      <svg width="32" height="32" viewBox="0 0 32 32"><circle cx="16" cy="16" r="16" fill="#dfe6e6" /><path d="M1 18C2 6 12-1 23 2c-3 3-2 6 2 9-6-2-10 0-11 5-3-1-4 0-5 3-3-3-6-3-8-1z" fill="#68b04a" /><path d="M13 13c9-1 13 7 10 17M22 5c-2 8 3 10 2 20M15 21q7 2 15-2" stroke="#2a84bc" stroke-width="3.500" fill="none" /></svg>
      <b class="zoomword">zoom</b>
      <svg width="30" height="30" viewBox="0 0 30 30"><circle cx="15" cy="15" r="12.800" fill="none" stroke="#eee" stroke-width="2.500" /><path d="M11 8.500v13l10-6.500z" fill="#eee" /></svg>
      <svg width="30" height="26" viewBox="0 0 30 26"><rect x="1.200" y="1.200" width="27.600" height="23" rx="3" fill="none" stroke="#eee" stroke-width="2.400" /><path d="M1 2h28v6H1z" fill="#eee" /><path d="M5 12h8M5 16h8M5 20h8M17 12l8 8M25 12l-8 8M18 14h6v4h-6z" fill="none" stroke="#eee" stroke-width="1.700" /><path d="M4 4.500h9" stroke="#000" stroke-width="2" stroke-dasharray="2 1.500" /></svg>
      <svg width="20" height="30" viewBox="0 0 20 30"><path d="M1.500 8L18 21.500 10 28.500v-27L18 8.500 1.500 22" fill="none" stroke="#eee" stroke-width="2" /></svg>
      <svg width="52" height="26" viewBox="0 0 52 26"><rect x="1.200" y="1.200" width="44" height="23" rx="6.500" fill="none" stroke="#808080" stroke-width="2" /><rect x="4.500" y="4.500" width="24" height="16.500" rx="3.500" fill="#eee" /><path d="M48 9q4 4 0 8z" fill="#808080" /></svg>
      <svg width="36" height="26" viewBox="0 0 36 26"><path d="M2 9q16-14 32 0M7.500 15q10.500-9 21 0" fill="none" stroke="#eee" stroke-width="4.200" /><path d="M12 19q6-5 12 0l-6 6.500z" fill="#eee" /></svg>
      <svg width="27" height="27" viewBox="0 0 27 27"><circle cx="11" cy="11" r="9.300" fill="none" stroke="#eee" stroke-width="2.500" /><path d="M17.500 17.500l8 8" stroke="#eee" stroke-width="3" /></svg>
      <svg width="27" height="28" viewBox="0 0 27 28"><rect x="1.200" y="1.200" width="24.600" height="10.600" rx="5.300" fill="none" stroke="#eee" stroke-width="2.200" /><circle cx="7" cy="6.500" r="3.700" fill="#eee" /><rect x="0" y="15" width="27" height="13" rx="6.500" fill="#eee" /><circle cx="20.500" cy="21.500" r="4" fill="#000" /></svg>
      <time>Wed Apr 3&ensp;7:02 PM</time>
    </div>
  </header>

  <main class="window">
    <div class="title"><i class="lt r"></i><i class="lt y"></i><i class="lt g"></i><h1>*newdemo — PCB Editor</h1></div>
    <div class="tb1">{@render strip(topTools)}</div>
    <div class="tb2">
      {@render popup('Track: use netclass width', 'w-track')}
      <div class="tool on flat">{@render icon('autotrack')}</div>
      <i class="bar"></i>
      {@render popup('Via: use netclass sizes', 'w-via')}
      <i class="bar"></i>
      <div class="combo"><i></i><span>Edge.Cuts</span></div>
      <div class="drop"><svg viewBox="0 0 16 12"><path d="M2 2.500l6 7 6-7" /></svg></div>
      <div class="pair">{@render icon('pair')}</div>
      <i class="bar"></i>
      {@render popup('0.5000 mm (19.69 mils)', 'w-grid')}
      <i class="bar"></i>
      {@render popup('Zoom 2.20', 'w-zoom')}
    </div>

    <div class="body">
      <aside class="tools left">{@render strip(leftTools)}</aside>

      <svg class="canvas" viewBox="69 243 2367 1335">
        <defs>
          <pattern id="hatch" width="12.200" height="8.700" patternUnits="userSpaceOnUse">
            <path d="M-1 9.400L13.200-.7" stroke="#c83434" stroke-width="1.200" fill="none" />
          </pattern>
          <mask id="copper" maskUnits="userSpaceOnUse" x="900" y="380" width="700" height="1120">
            <polygon points={board} fill="#fff" />
            {#each zones as z}<polygon points={z} fill="#fff" stroke="#000" stroke-width="18" stroke-linejoin="round" /><polygon points={z} fill="#fff" />{/each}
            <path d="M1242.500 1111h36.500q0 6-4 11l-3 3h-22l-4-3q-3-5-3.500-11z" fill="#fff" />
            <circle cx="1260.800" cy="597.700" r="35" fill="#000" />
            <path d="M1234 571l54 54M1288 571l-54 54" stroke="#fff" stroke-width="10" />
            <rect x="1226" y="923" width="70" height="70.500" rx="7" fill="#000" />
            <path d="M1260.500 920v76M1223 958.200h76" stroke="#fff" stroke-width="9" />
            <rect x="1222.300" y="1125" width="76.200" height="41.700" rx="9" fill="#000" />
            <rect x="1046.200" y="1128.300" width="76.600" height="38.400" rx="9" fill="#000" />
            <rect x="1046.200" y="1232" width="76.600" height="40" rx="9" fill="#000" />
            {#each swPads as [x, y], i}
              <circle cx={x} cy={y} r="26" fill="#000" />
              {#if i > 1}<path d="M{x - 20} {y - 20}l40 40M{x + 20} {y - 20}l-40 40" stroke="#fff" stroke-width="9" />{/if}
            {/each}
          </mask>
          {#each [board, ...zones] as z, i}<clipPath id="zc{i}"><polygon points={z} /></clipPath>{/each}
        </defs>

        <rect x="69" y="243" width="2367" height="1335" fill="#001023" />
        <g fill="#84868a">{#each gridDots as d}<rect x={d.x} y={d.y} width={d.w} height={d.h} />{/each}</g>

        <g class="yard">
          <path d="M1199 888A207 207 0 1 1 1323 888Q1318.500 890 1318.500 896V1001.400H1203.500V896Q1203.500 890 1199 888" />
          <path d="M1226.400 1162V1027.300h68.400V1162M1050.300 1132.300h68.400v135.400h-68.400zM1326.300 1222.300h132.400v167h-132.400z" />
        </g>
        <g class="fab">
          <path d={outline} transform="translate(1260.800 690) scale(.989) translate(-1260.800 -690)" />
          <path d="M1237.900 866A177.500 177.500 0 1 1 1284.100 866M1237.900 800A112 112 0 1 1 1284.100 800M1237.900 723.500A40.900 40.900 0 1 1 1284.100 723.500M1237.900 932V673a23.100 23.100 0 0 1 46.200 0V932M1125.600 543l14.600 17M1396 543l-14.600 17" />
          <path d="M1233 1055v78M1289.300 1055v78M1056.600 1158v83M1113.500 1158v83M1371 1253h43M1371 1358.700h43M1340.300 1263v85M1445.700 1263v85" />
          <circle cx="1393.200" cy="1305.700" r="35.500" />
        </g>
        <g class="silk">
          <path d={outline} />
          <path d="M1263.600 898v23M1252 909.300h23M1227 1038v124h68.500v-124M1054.700 1165v73M1115.800 1165v73M1379 1245h28M1379 1367.700h28M1336.300 1266v81M1450 1266v81" />
        </g>
        {@render vtext(1500, 739, 91, 'Battery', 'lbl fabt')}
        {@render vtext(1232, 850, 44, 'BT1', 'lbl fabt')}
        {@render vtext(1195.2, 980, 44, 'BT1', 'lbl silkt')}
        {@render vtext(1225, 1109, 30, 'D1', 'lbl silkt')}
        {@render vtext(1271, 1109, 30, 'D1', 'lbl fabt')}
        {@render vtext(1317, 1117, 45, 'LED', 'lbl fabt')}
        {@render vtext(1049, 1231, 64, 'R_US', 'lbl fabt')}
        {@render vtext(1095.4, 1215, 31, 'R1', 'lbl fabt')}
        {@render vtext(1141, 1215, 31, 'R1', 'lbl silkt')}
        {@render vtext(1327.7, 1332, 51, 'SW1', 'lbl silkt')}
        {@render vtext(1402.8, 1332, 51, 'SW1', 'lbl fabt')}
        {@render vtext(1481, 1353, 113, 'SW_SPST', 'lbl fabt')}
        <path class="yard thick" d="M1250 1095h22M1260.800 1085v21M1074 1200h22M1085 1190v20" />

        <rect x="900" y="380" width="700" height="1120" fill="#c83434" fill-opacity=".6" mask="url(#copper)" />
        {#each [board, ...zones] as z, i}
          <polygon points={z} fill="none" stroke="#c83434" stroke-width="1.200" />
          <polygon points={z} fill="none" stroke="url(#hatch)" stroke-width="17" clip-path="url(#zc{i})" />
        {/each}

        <g fill="#c83434">
          <rect x="1232" y="1031" width="59" height="24" rx="4" /><rect x="1232" y="1133" width="59" height="24" rx="4" />
          <rect x="1055.800" y="1136" width="59.200" height="22" rx="4" /><rect x="1055.800" y="1241" width="59.200" height="21" rx="4" />
        </g>
        <g fill="none" stroke="#c83434">
          <rect x="1227.500" y="1028.300" width="66" height="31" rx="6" /><rect x="1227.500" y="1130.300" width="66" height="31" rx="6" />
          <rect x="1052" y="1133.300" width="66" height="29" rx="6" /><rect x="1052" y="1237.300" width="66" height="29" rx="6" />
        </g>
        <g fill="#e3b72e">
          <circle cx="1260.800" cy="597.700" r="26.500" /><rect x="1234" y="932.200" width="53" height="52.600" />
          {#each swPads as [x, y]}<circle cx={x} cy={y} r="18" />{/each}
        </g>
        <g fill="#001023">
          <circle cx="1260.800" cy="597.700" r="13" /><circle cx="1260.800" cy="958" r="13" />
          {#each swPads as [x, y]}<circle cx={x} cy={y} r="10" />{/each}
        </g>
        <g fill="none" stroke="#e3b72e" stroke-width="1.200">
          <circle cx="1260.800" cy="597.700" r="29.600" /><rect x="1230.300" y="928.300" width="60" height="60.500" rx="4" />
          {#each swPads as [x, y]}<circle cx={x} cy={y} r="20.800" />{/each}
        </g>
        <path d="M1085 1147.500L1261 1145.300M1085 1252L1353.300 1249V1363" fill="none" stroke="#00f8ff" stroke-opacity=".38" stroke-width="1.200" />
        <text class="pad" x="1260.800" y="593" font-size="23">2</text>
        <text class="pad" x="1260.800" y="617.500" font-size="15" textLength="29" lengthAdjust="spacingAndGlyphs">GND</text>
        <text class="pad" x="1260.800" y="954" font-size="23">1</text>
        <text class="pad dimt" x="1260.800" y="969" font-size="8.500" textLength="50">Net-(BT1-+)</text>
      </svg>

      <aside class="tools right">{@render strip(rightTools)}</aside>

      <section class="panel">
        <h2>Appearance</h2>
        <div class="group">
          <nav><b>Layers</b><span>Objects</span><span>Nets</span></nav>
          <div class="listwrap">
            <ul>
              {#each layers as [name, color, cls]}
                <li class:cur={name === 'Edge.Cuts'}>
                  <i class="mark"></i>
                  <i class="sw {cls ?? ''}" style:background-color={color || null}></i>
                  <svg class="eye" viewBox="0 0 32 32"><circle cx="16" cy="16" r="16" class="halo" /><path d="M3 16Q16 4 29 16 16 28 3 16z" fill="#ded3dd" /><circle cx="16" cy="16" r="5.300" fill="#333" /><circle cx="16" cy="16" r="3.400" fill="#ded3dd" /><circle cx="16" cy="16" r="1.800" fill="#333" /></svg>
                  <span>{name}</span>
                </li>
              {/each}
            </ul>
            <div class="scroll"><i></i></div>
          </div>
          <div class="disclose"><i></i>Layer Display Options</div>
        </div>
        <label>Presets (Ctrl+Tab):</label>
        {@render popup('All Layers', 'w-side')}
        <label class="second">Viewports (Option+Tab):</label>
        {@render popup('', 'w-side empty')}
        <div class="grip"><i></i></div>
        <h2 class="sel">Selection Filter</h2>
        <div class="filters">
          {#each filters as [name, on]}
            <div class="chk"><i class:on>{#if on}<svg viewBox="0 0 28 28"><path d="M6.500 15l5 5.500L21.500 7.500" /></svg>{/if}</i>{name}</div>
          {/each}
        </div>
      </section>
    </div>

    <div class="stats">
      <div>Pads<b>10</b></div><div>Vias<b>0</b></div><div>Track Segments<b>0</b></div><div>Nets<b>4</b></div><div>Unrouted<b>3</b></div>
    </div>
    <footer><span>Z 2.46</span><span>X 81.0000&ensp;Y 34.0000</span><span>dx 81.0000&ensp;dy 34.0000&ensp;dist 87.8465</span><span>grid 0.5000</span><span>mm</span><span>Select item(s)</span></footer>
  </main>

  <div class="behind">even</div>
  <div class="dock">
    <svg class="defs" width="0" height="0">
      <defs>
        {#each [['fin', '#1ec8fb', '#1463ee'], ['pod', '#c964f5', '#7a2bc0'], ['mail', '#1a68f2', '#14c0fb'], ['msg', '#62f577', '#0cbc2c'], ['mus', '#fb5b74', '#fa233b'], ['app', '#17bdfb', '#1b6df0'], ['pur', '#8b38b4', '#5a2d8c']] as [id, a, b]}
          <linearGradient id="dk-{id}" x2="0" y2="1"><stop offset="0" stop-color={a} /><stop offset="1" stop-color={b} /></linearGradient>
        {/each}
      </defs>
    </svg>
    {#each dockA as d}{@render dockItem(d)}{/each}
    <i class="dsep"></i>
    {#each dockB as d}{@render dockItem(d)}{/each}
    <i class="dsep wide"></i>
    {#each thumbs as [app, art]}
      <div class="dk thumb"><svg viewBox="0 0 62 54">{@html art}</svg><svg class="mini" viewBox="0 0 54 54">{@html minis[app]}</svg></div>
    {/each}
    <div class="dk trash">
      <svg viewBox="0 0 48 62"><path d="M2 12h44l-5 44q-17 8-34 0z" fill="#63696b" /><path d="M8 14l4 43M18 15l2 46M40 14l-4 43M30 15l-2 46" stroke="#868c8e" stroke-width="3" opacity=".6" /><path d="M2 11L8 3l6 3 5-6 6 5 8-4 4 5 6 1 3 6q-22 8-44-1z" fill="#e4e4e4" /><path d="M10 6l5 7M20 4l-2 9M30 5l4 8" stroke="#666" stroke-width="2" /><path d="M14 8l4-2 2 4zM30 12l4-6 1 6z" fill="#d08030" /><ellipse cx="24" cy="12" rx="22" ry="5" fill="none" stroke="#a8acad" stroke-width="2" /></svg>
    </div>
  </div>
</div>

<style>
  :global(body) { background: #000; overflow: hidden; }
  .screen { position: relative; z-index: 0; width: 2880px; height: 1800px; overflow: hidden; color: #e0dfdf; font-family: Inter, "Liberation Sans", sans-serif; font-size: 24px;
    background: linear-gradient(90deg, transparent 1238px, #9b9b9b 1238px) 0 1700px / 100% 12px no-repeat, linear-gradient(90deg, #000 1238px, #d6d6d6 1238px 1300px, #bdbdbd 1300px 1303px, #dcdcdc 1303px 1350px, #b4b4b4 1350px 1352px, #dcdcdc 1352px 2830px, #e6e6e6) 0 1712px / 100% 100px no-repeat, linear-gradient(90deg, #8a8a8a, #777 1238px, #aaa) 0 1600px / 100% 112px no-repeat #000; }
  .menubar { display: grid; height: 50px; padding-left: 41px; align-items: center; background: #000; color: #fff; font-size: 25.400px; letter-spacing: -.2px; line-height: 46px; white-space: nowrap;
    grid-template-columns: 68px 118px 83px 89px 99px 108px 112px 130px 106px 187px 137px 562px 1fr; }
  .menubar > span, .menubar > strong { position: relative; top: -2px; }
  .menubar strong { font-weight: 700; }
  .apple { width: 27px; height: 31px; position: relative; top: -2px; }
  .status { display: grid; align-items: center; justify-items: center; grid-template-columns: 69px 71px 106px 72px 68px 68px 79px 79px 66px 65px 295px; color: #eee; }
  .status svg { position: relative; top: -1px; }
  .status time { justify-self: start; padding-left: 17px; position: relative; top: -2px; font-size: 26px; letter-spacing: -.1px; }
  .zoomword { font-weight: 500; font-size: 33px; letter-spacing: -1.300px; position: relative; top: -4px; }

  .window { display: flex; flex-direction: column; box-sizing: border-box; width: 2880px; height: 1651px; overflow: hidden; background: #323232; border: 2px solid #6a6a6a; border-bottom-color: #5c5c5c; border-top-color: #858484; border-radius: 20px; box-shadow: 0 2px 0 #000; }
  .title { display: flex; flex: none; height: 54px; gap: 16px; align-items: center; padding-left: 14px; background: #413f40; border-bottom: 2px solid #0a0a0a; }
  .lt { width: 24px; height: 24px; margin-top: -2px; border-radius: 50%; }
  .r { background: #ff5f57; } .y { background: #febc2e; } .g { background: #28c840; }
  h1 { flex: 1; margin: 0 134px 5px 0; padding-right: 10px; text-align: center; font-size: 26.300px; font-weight: 600; letter-spacing: .1px; color: #b8b6b7; }
  .tb1 { display: flex; flex: none; height: 64px; padding-left: 6px; align-items: center; }
  .tb1 .tool { width: 64px; }
  .tb1 .sep { width: 2px; height: 44px; margin: 0 8px; background: #555; }
  .ico { display: block; width: 48px; height: 48px; overflow: visible; }
  .tool { display: flex; flex: none; width: 60px; height: 60px; align-items: center; justify-content: center; box-sizing: border-box; }
  .on.tool { background: #131d2f; border: 2px solid #3c6491; }
  .tb2 { display: flex; flex: none; box-sizing: border-box; height: 70px; padding: 2px 0 0 8px; align-items: center; }
  .tb2 > * { position: relative; top: -1px; }
  .popup { display: flex; flex: none; height: 40px; box-sizing: border-box; padding: 0 4px 2px 17px; align-items: center; justify-content: space-between; border-radius: 10px; background: #656565; box-shadow: inset 0 1px 0 #858585, 0 1px 2px #1c1c1c; font-size: 26px; letter-spacing: -.15px; white-space: nowrap; color: #e4e4e4; }
  .popup span { margin-top: -2px; }
  .stepper { width: 32px; height: 32px; margin-top: 2px; flex: none; border-radius: 8px; background: linear-gradient(#2380ec, #0b6ad6); fill: none; stroke: #fff; stroke-width: 3; stroke-linecap: round; stroke-linejoin: round; }
  .w-track { width: 370px; margin-right: 3px; } .w-via { width: 357px; } .w-grid { width: 399px; } .w-zoom { width: 227px; }
  .bar { flex: none; width: 2px; height: 44px; margin: 0 10.500px 0 11px; background: #505050; }
  .combo { display: flex; width: 302px; height: 44px; box-sizing: border-box; align-items: center; padding-left: 8px; gap: 9px; background: #1e1e1e; border: 2px solid #7c7c7c; color: #e0e0e0; font-size: 25.500px; }
  .combo i { width: 24px; height: 24px; background: #d0d2cd; border: 2px solid #000; }
  .drop { display: flex; width: 40px; height: 40px; margin: 0 13px 0 8px; border-radius: 10px; background: #fff; align-items: center; justify-content: center; }
  .drop svg { width: 16px; height: 12px; fill: none; stroke: #222; stroke-width: 2.500; }
  .pair { margin-right: 5px; }

  .body { display: flex; flex: none; height: 1338px; }
  .tools { display: flex; flex-direction: column; box-sizing: border-box; padding-top: 9px; gap: 4px; flex: none; }
  .left { width: 67px; padding-left: 1px; }
  .right { width: 84px; padding-left: 6px; }
  .tools .sep { width: 44px; height: 2px; margin: 6px 8px; background: #555; }
  .canvas { display: block; flex: none; width: 2367px; height: 1335px; margin-top: 1px; outline: 2px solid #1c1c1c; outline-offset: -1px; }
  .fab { fill: none; stroke: #afafaf; stroke-width: 1.800; }
  .silk { fill: none; stroke: #f2eda1; stroke-width: 2; }
  .yard { fill: none; stroke: #ff26e2; stroke-width: 1.200; }
  .thick { stroke-width: 2; }
  .lbl { font-family: "DejaVu Sans Mono", monospace; font-size: 28.500px; stroke-width: .5; }
  .fabt { fill: #afafaf; stroke: #afafaf; } .silkt { fill: #f2eda1; stroke: #f2eda1; }
  .pad { font-family: "DejaVu Sans Mono", monospace; fill: #fff; fill-opacity: .95; text-anchor: middle; }
  .dimt { fill-opacity: .7; }

  .panel { width: 358px; flex: none; }
  h2 { margin: 0; height: 34px; line-height: 32px; padding-left: 6px; background: #202020; font-size: 21.500px; font-weight: 500; letter-spacing: .1px; }
  .group { position: relative; height: 868px; }
  .group::before { content: ""; position: absolute; inset: 47px 0 0 0; border: 2px solid #484848; border-radius: 12px; background: #373737; }
  nav { position: relative; display: grid; grid-template-columns: 114px 126px 98px; box-sizing: border-box; width: 342px; height: 44px; margin: 0 0 0 10px; top: 25px; border: 2px solid #4c4c4c; border-radius: 12px; background: #373737; text-align: center; line-height: 38px; font-size: 22px; font-weight: 500; }
  nav b { font-weight: 500; background: #6b6b6b; border-radius: 10px; box-shadow: 0 1px 1px #222; }
  nav span + span { border-left: 2px solid #2e2e2e; height: 24px; line-height: 24px; margin-top: 7px; }
  .listwrap { position: relative; display: flex; margin: 36px 0 0 6px; height: 738px; }
  ul { flex: none; width: 318px; margin: 0; padding: 1px 0 0; box-sizing: border-box; height: 738px; overflow: hidden; list-style: none; background: #3a3a3a; }
  li { display: flex; height: 36px; align-items: center; font-size: 24px; letter-spacing: -.1px; }
  li span { margin-left: -1px; }
  .mark { width: 12px; height: 22px; margin: 0 12px; }
  .cur { background: #4a4a4a; }
  .cur .mark { background: #3f4cff; clip-path: polygon(0 0, 100% 50%, 0 100%); }
  .sw { width: 32px; height: 24px; }
  .fmask { background: conic-gradient(#562965 25%, #6b3d7b 0 50%, #562965 0 75%, #6b3d7b 0) 0 0 / 24px 24px; }
  .bmask { background: conic-gradient(#02645b 25%, #147a72 0 50%, #02645b 0 75%, #147a72 0) 0 0 / 24px 24px; }
  .eye { width: 32px; height: 32px; margin: 0 11px 0 12px; }
  .halo { fill: #363636; }
  .cur .halo { fill: #3c3c3c; }
  .scroll { width: 30px; box-sizing: border-box; background: #424242; border-left: 2px solid #4a4a4a; padding: 6px 0 0 6px; }
  .scroll i { display: block; width: 16px; height: 494px; border-radius: 8px; background: #9f9f9f; }
  .disclose { position: relative; display: flex; align-items: center; gap: 5px; height: 50px; padding-left: 29px; font-size: 24px; }
  .disclose i { width: 10px; height: 17px; background: #eee; clip-path: polygon(0 0, 100% 50%, 0 100%); }
  label { display: block; height: 33px; margin: 10px 0 0 14px; line-height: 28px; font-size: 23.500px; }
  label.second { margin-top: 10px; height: 32px; }
  .w-side { width: 332px; margin-left: 14px; font-size: 24.500px; }
  .empty span { width: 274px; height: 3px; margin: 5px 0 0 -1px; background: linear-gradient(#4d4d4d 1px, #909090 1px); }
  .grip { display: flex; height: 25px; align-items: end; justify-content: center; }
  .grip i { width: 12px; height: 12px; margin-bottom: 1px; border-radius: 50%; background: #282828; }
  .filters { display: grid; grid-template-columns: 200px 200px; padding: 10px 0 0 10px; grid-auto-rows: 32.100px; width: 400px; }
  .chk { display: flex; gap: 12px; align-items: center; white-space: nowrap; font-size: 23.200px; }
  .chk i { width: 28px; height: 28px; flex: none; border-radius: 7px; background: linear-gradient(#505050, #666); }
  .chk i.on { background: linear-gradient(#1b76f2, #0a5fe0); box-shadow: 0 1px 2px #222; }
  .chk svg { display: block; fill: none; stroke: #fff; stroke-width: 3.400; stroke-linecap: round; stroke-linejoin: round; }

  .stats { display: grid; grid-template-columns: 112px 106px 230px 110px 1fr; height: 64px; padding: 5px 0 0 19px; box-sizing: border-box; border-bottom: 2px solid #0c0c0c; font-size: 22px; line-height: 31px; flex: none; font-weight: 500; }
  .stats b { display: block; font-weight: 500; }
  footer { display: grid; flex: 1; grid-template-columns: 144px 314px 502px 363px 109px 1fr; padding-left: 880px; line-height: 56px; background: linear-gradient(#323232, #262626); color: #a2a2a2; font-size: 22.500px; white-space: nowrap; }

  .behind { position: absolute; right: 14px; top: 1684px; color: #222; font-size: 29px; z-index: -1; }
  .dock { position: absolute; left: 53px; top: 1702px; width: 2775px; height: 88px; box-sizing: border-box; display: flex; align-items: flex-start; padding-left: 4px; border: 2px solid rgba(160, 160, 160, .4); border-radius: 24px; background: linear-gradient(90deg, #1e1e1e 1090px, #333 1160px, #5e5e5e 1240px, #707070 1330px, #787878); }
  .defs { position: absolute; }
  .dk { position: relative; flex: none; width: 69.250px; height: 84px; }
  .dk > svg { display: block; width: 54px; height: 54px; margin: 12px 7px 0; overflow: visible; }
  .run { position: absolute; left: 30px; top: 74px; width: 8px; height: 8px; border-radius: 50%; background: #eee; }
  .dk:nth-of-type(-n + 16) .run { background: #a0a0a0; }
  .badge { position: absolute; left: 41px; top: 6px; width: 25px; height: 25px; border-radius: 50%; background: #ee4035; color: #fff; font-size: 17px; font-weight: 500; line-height: 25px; text-align: center; }
  .dsep { flex: none; width: 2px; height: 64px; margin: 9px 14px; background: #a4a4a4; }
  .dsep.wide { margin: 9px 15.500px; }
  .dk.thumb > svg { width: 62px; margin: 12px 3px 0; }
  .dk.thumb > .mini { position: absolute; left: 42px; top: 49px; width: 22px; height: 20px; margin: 0; }
  .dk.trash > svg { width: 48px; height: 62px; margin: 8px 0 0 9px; }
</style>
